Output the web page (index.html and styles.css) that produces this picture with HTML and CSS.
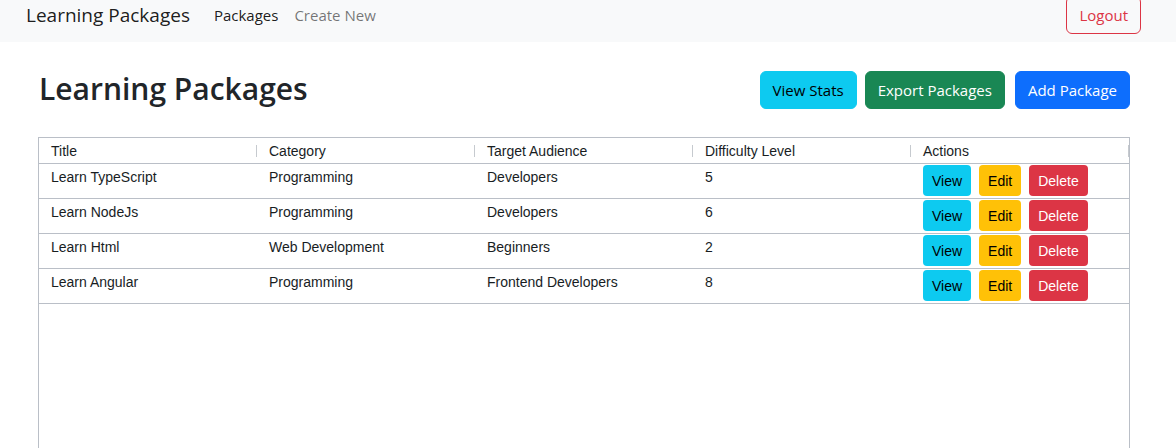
FILE: index.html
```html
<!DOCTYPE html>
<html lang="en">
<head>
<meta charset="utf-8">
<title>Learning Packages</title>
<link rel="stylesheet" href="styles.css">
</head>
<body>
<nav class="navbar">
  <div class="nav-left">
    <a class="brand" href="#">Learning Packages</a>
    <a class="nav-link active" href="#">Packages</a>
    <a class="nav-link" href="#">Create New</a>
  </div>
  <button class="btn btn-outline-danger">Logout</button>
</nav>
<main class="content">
  <div class="page-head">
    <h1 class="title">Learning Packages</h1>
    <div class="actions">
      <button class="btn btn-info">View Stats</button>
      <button class="btn btn-success">Export Packages</button>
      <button class="btn btn-primary">Add Package</button>
    </div>
  </div>
  <div class="grid">
    <div class="row header">
      <div class="cell hcell">Title</div>
      <div class="cell hcell">Category</div>
      <div class="cell hcell">Target Audience</div>
      <div class="cell hcell">Difficulty Level</div>
      <div class="cell hcell">Actions</div>
    </div>
    <div class="row">
      <div class="cell">Learn TypeScript</div>
      <div class="cell">Programming</div>
      <div class="cell">Developers</div>
      <div class="cell">5</div>
      <div class="cell btns"><button class="sbtn s-info">View</button><button class="sbtn s-warn">Edit</button><button class="sbtn s-danger">Delete</button></div>
    </div>
    <div class="row">
      <div class="cell">Learn NodeJs</div>
      <div class="cell">Programming</div>
      <div class="cell">Developers</div>
      <div class="cell">6</div>
      <div class="cell btns"><button class="sbtn s-info">View</button><button class="sbtn s-warn">Edit</button><button class="sbtn s-danger">Delete</button></div>
    </div>
    <div class="row">
      <div class="cell">Learn Html</div>
      <div class="cell">Web Development</div>
      <div class="cell">Beginners</div>
      <div class="cell">2</div>
      <div class="cell btns"><button class="sbtn s-info">View</button><button class="sbtn s-warn">Edit</button><button class="sbtn s-danger">Delete</button></div>
    </div>
    <div class="row">
      <div class="cell">Learn Angular</div>
      <div class="cell">Programming</div>
      <div class="cell">Frontend Developers</div>
      <div class="cell">8</div>
      <div class="cell btns"><button class="sbtn s-info">View</button><button class="sbtn s-warn">Edit</button><button class="sbtn s-danger">Delete</button></div>
    </div>
  </div>
</main>
</body>
</html>
```

FILE: styles.css
```css
* { box-sizing: border-box; }
html, body { margin: 0; padding: 0; }
body {
  font-family: "Open Sans", "Noto Sans", sans-serif;
  color: #212529;
  background: #fff;
  overflow: hidden;
}
.navbar {
  margin-top: -12px;
  height: 54px;
  background: #f8f9fa;
  display: flex;
  align-items: center;
  justify-content: space-between;
  padding: 0 35px 0 26px;
}
.nav-left { display: flex; align-items: center; }
.brand {
  font-size: 19px;
  color: rgba(0,0,0,.9);
  text-decoration: none;
  margin-right: 24px;
}
.nav-link {
  font-size: 15px;
  color: rgba(0,0,0,.55);
  text-decoration: none;
  margin-right: 16px;
}
.nav-link.active { color: rgba(0,0,0,.9); }
.btn {
  font-family: inherit;
  font-size: 15px;
  height: 38px;
  padding: 0 12px;
  border-radius: 6px;
  border: 1px solid transparent;
  cursor: pointer;
}
.btn-outline-danger { color: #dc3545; border-color: #dc3545; background: transparent; }
.btn-info { background: #0dcaf0; border-color: #0dcaf0; color: #000; }
.btn-success { background: #198754; border-color: #198754; color: #fff; }
.btn-primary { background: #0d6efd; border-color: #0d6efd; color: #fff; }
.content { padding: 0 46px 0 38px; }
.page-head {
  display: flex;
  align-items: flex-start;
  justify-content: space-between;
  height: 95px;
  padding-top: 29px;
}
.title {
  margin: 0;
  font-size: 30px;
  line-height: 36px;
  font-weight: 600;
  color: #212529;
  padding-left: 1px;
}
.actions { display: flex; gap: 8px; }
.btn-primary { margin-left: 2px; }
.grid {
  border: 1px solid #babfc7;
  height: 330px;
  font-family: "Liberation Sans", Arial, sans-serif;
  font-size: 14px;
  color: #181d1f;
}
.row {
  display: grid;
  grid-template-columns: repeat(5, 218px);
  height: 35px;
  border-bottom: 1px solid #babfc7;
}
.row.header { height: 26px; }
.cell { padding: 5px 0 0 12px; line-height: 16px; white-space: nowrap; }
.hcell {
  position: relative;
  padding-top: 0;
  display: flex;
  align-items: center;
}
.hcell::after {
  content: "";
  position: absolute;
  right: 0;
  top: 7px;
  height: 12px;
  width: 1px;
  background: #c6cacf;
}
.btns { padding: 1px 0 0 12px; display: flex; gap: 8px; align-items: flex-start; }
.sbtn {
  font-family: "Liberation Sans", Arial, sans-serif;
  font-size: 14px;
  height: 31px;
  padding: 0 8px;
  border-radius: 4px;
  border: 1px solid transparent;
  cursor: pointer;
}
.s-info { background: #0dcaf0; color: #000; }
.s-warn { background: #ffc107; color: #000; }
.s-danger { background: #dc3545; color: #fff; }
```
